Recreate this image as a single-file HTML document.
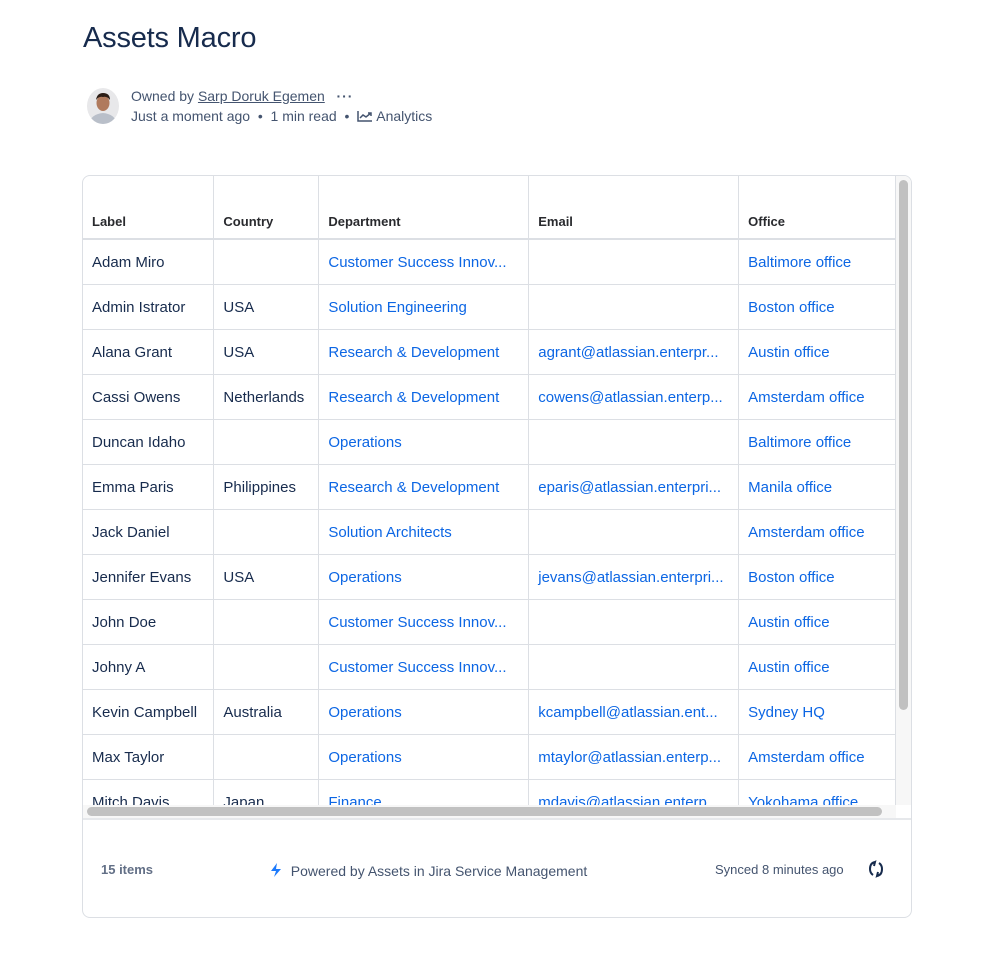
<!DOCTYPE html>
<html><head><meta charset="utf-8"><style>
*{box-sizing:border-box;margin:0;padding:0}
body{width:999px;height:972px;background:#fff;font-family:"Liberation Sans",sans-serif;color:#172b4d;position:relative;overflow:hidden}
h1{position:absolute;left:83px;top:22px;font-size:29px;font-weight:400;color:#172b4d;letter-spacing:-0.2px}
.av{position:absolute;left:87px;top:88px;width:32px;height:36px;border-radius:50%;overflow:hidden}
.meta{position:absolute;left:131px;font-size:14px;color:#44546f}
.box{position:absolute;left:82px;top:175px;width:830px;height:743px;border:1px solid #dcdfe4;border-radius:8px;overflow:hidden}
.tw{position:absolute;left:0;top:0;width:813px;height:629px;overflow:hidden}
table{border-collapse:collapse;font-size:15px;position:absolute;left:0;top:0}
td,th{border-right:1px solid #dcdfe4;border-bottom:1px solid #dcdfe4;padding:0 9px;height:45px;white-space:nowrap;text-align:left;vertical-align:middle;padding-top:1px}
th{height:63px;font-size:13px;font-weight:700;color:#292a2e;vertical-align:bottom;padding-bottom:9px;border-bottom:2px solid #dcdfe4}
td.l{color:#0c66e4}
.vs{position:absolute;left:813px;top:0;width:16px;height:629px;background:#f7f7f7}
.vs div{position:absolute;left:3px;top:4px;width:9px;height:530px;border-radius:5px;background:#c1c1c1}
.hs{position:absolute;left:0;top:629px;width:813px;height:14px;background:#f7f7f7}
.hs div{position:absolute;left:4px;top:2px;width:795px;height:9px;border-radius:5px;background:#c1c1c1}
.sep{position:absolute;left:0;top:642px;width:830px;height:2px;background:#e6e8eb}
.ft{position:absolute;top:686px;font-size:13px;color:#44546f}
</style></head><body>
<h1>Assets Macro</h1>
<div class="av"><svg width="32" height="36" viewBox="0 0 32 36"><rect width="32" height="36" fill="#e8e8ea"/><path d="M2 36 Q4 26 16 25 Q28 26 30 36Z" fill="#b9bfc9"/><ellipse cx="16" cy="15" rx="6.5" ry="8" fill="#b07a5d"/><path d="M9 12 Q10 5 16 5 Q23 5 23 12 Q20 8 16 9 Q12 8 9 12Z" fill="#2b1d16"/></svg></div>
<div class="meta" style="top:88px">Owned by <span style="text-decoration:underline">Sarp Doruk Egemen</span> &nbsp; <b style="letter-spacing:1px">···</b></div>
<div class="meta" style="top:108px">Just a moment ago &nbsp;•&nbsp; 1 min read &nbsp;•&nbsp; <svg width="16" height="12" viewBox="0 0 16 12" style="vertical-align:-1px"><path d="M1 1V11H15M3 8L6 5L9 7L14 3M11 3H14V6" fill="none" stroke="#44546f" stroke-width="1.5"/></svg> Analytics</div>
<div class="box">
<div class="tw"><table>
<tr><th style="width:131px">Label</th><th style="width:105px">Country</th><th style="width:210px">Department</th><th style="width:210px">Email</th><th style="width:157px">Office</th></tr>
<tr><td>Adam Miro</td><td></td><td class="l">Customer Success Innov...</td><td></td><td class="l">Baltimore office</td></tr>
<tr><td>Admin Istrator</td><td>USA</td><td class="l">Solution Engineering</td><td></td><td class="l">Boston office</td></tr>
<tr><td>Alana Grant</td><td>USA</td><td class="l">Research &amp; Development</td><td class="l">agrant@atlassian.enterpr...</td><td class="l">Austin office</td></tr>
<tr><td>Cassi Owens</td><td>Netherlands</td><td class="l">Research &amp; Development</td><td class="l">cowens@atlassian.enterp...</td><td class="l">Amsterdam office</td></tr>
<tr><td>Duncan Idaho</td><td></td><td class="l">Operations</td><td></td><td class="l">Baltimore office</td></tr>
<tr><td>Emma Paris</td><td>Philippines</td><td class="l">Research &amp; Development</td><td class="l">eparis@atlassian.enterpri...</td><td class="l">Manila office</td></tr>
<tr><td>Jack Daniel</td><td></td><td class="l">Solution Architects</td><td></td><td class="l">Amsterdam office</td></tr>
<tr><td>Jennifer Evans</td><td>USA</td><td class="l">Operations</td><td class="l">jevans@atlassian.enterpri...</td><td class="l">Boston office</td></tr>
<tr><td>John Doe</td><td></td><td class="l">Customer Success Innov...</td><td></td><td class="l">Austin office</td></tr>
<tr><td>Johny A</td><td></td><td class="l">Customer Success Innov...</td><td></td><td class="l">Austin office</td></tr>
<tr><td>Kevin Campbell</td><td>Australia</td><td class="l">Operations</td><td class="l">kcampbell@atlassian.ent...</td><td class="l">Sydney HQ</td></tr>
<tr><td>Max Taylor</td><td></td><td class="l">Operations</td><td class="l">mtaylor@atlassian.enterp...</td><td class="l">Amsterdam office</td></tr>
<tr><td>Mitch Davis</td><td>Japan</td><td class="l">Finance</td><td class="l">mdavis@atlassian.enterp...</td><td class="l">Yokohama office</td></tr>
</table></div>
<div class="vs"><div></div></div>
<div class="hs"><div></div></div>
<div class="sep"></div>
<div class="ft" style="left:18px;font-weight:700;color:#626f86">15 items</div>
<div class="ft" style="left:186px;font-size:14px"><svg width="14" height="16" viewBox="0 0 14 16" style="vertical-align:-2px"><path d="M8 1L2 9H7L5 15L12 7H7Z" fill="#1d7afc"/></svg>&nbsp; Powered by Assets in Jira Service Management</div>
<div class="ft" style="left:632px">Synced 8 minutes ago</div>
<svg style="position:absolute;left:783px;top:683px" width="20" height="20" viewBox="0 0 20 20"><path d="M9 3Q4 4 4 10Q4 14 7 16M5 5L9 3L8 7M11 17Q16 16 16 10Q16 6 13 4M15 15L11 17L12 13" fill="none" stroke="#172b4d" stroke-width="2"/></svg>
</div>
</body></html>
